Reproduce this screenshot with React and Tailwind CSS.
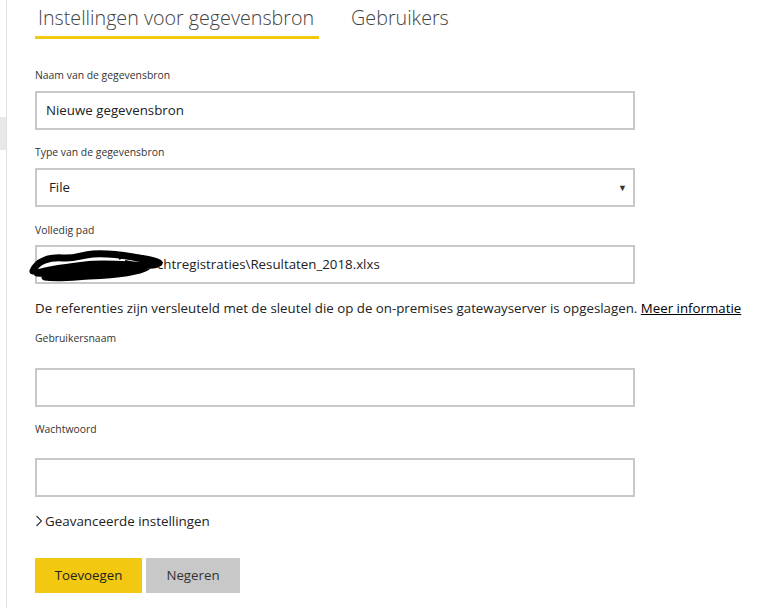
import React from 'react';

const font = { fontFamily: '"Open Sans", "Noto Sans", sans-serif' };

function Field({ label, gap = 8, children }) {
    return (
        <div>
            <div className="text-[10.4px] text-[#333] h-[16px] leading-[16px]" style={{ marginBottom: gap }}>{label}</div>
            {children}
        </div>
    );
}

function TextBox({ value }) {
    return (
        <div className="h-[39px] w-[600px] border-2 border-[#c8c8c8] bg-white flex items-center px-[9px] text-[13.3px] text-[#222]">
            {value}
        </div>
    );
}

export default function App() {
    return (
        <div className="relative w-[784px] h-[608px] bg-white overflow-hidden" style={font}>
            <div className="absolute left-0 top-[117px] w-[6px] h-[33px] bg-[#e8e8e8]"></div>
            <div className="absolute left-[6px] top-0 w-px h-full bg-[#e1e1e1]"></div>

            <div className="pl-[35px]">
                {/* tabs */}
                <div className="flex items-end h-[39px] gap-[32px]">
                    <div className="h-full border-b-[3px] border-[#f2c811] pl-[3px] pr-[5px] text-[19.7px] text-[#444] font-light leading-[36px]">
                        Instellingen voor gegevensbron
                    </div>
                    <div className="h-full text-[19.7px] text-[#444] font-light leading-[36px]">Gebruikers</div>
                </div>

                <div className="mt-[28px]">
                    <Field label="Naam van de gegevensbron">
                        <TextBox value="Nieuwe gegevensbron" />
                    </Field>
                </div>

                <div className="mt-[14px]">
                    <Field label="Type van de gegevensbron">
                        <div className="h-[39px] w-[600px] border-2 border-[#c8c8c8] bg-white flex items-center justify-between pl-[12px] pr-[6px] text-[13.3px] text-[#222]">
                            <span>File</span>
                            <span className="text-[9px] text-[#333]">▼</span>
                        </div>
                    </Field>
                </div>

                <div className="mt-[15px]">
                    <Field label="Volledig pad" gap={7}>
                        <div className="relative">
                            <div className="h-[39px] w-[600px] border-2 border-[#c8c8c8] bg-white flex items-center pl-[120px] text-[13.3px] text-[#222]">
                                chtregistraties\Resultaten_2018.xlxs
                            </div>
                            <svg className="absolute left-[-6px] top-[4px]" width="134" height="34" viewBox="0 0 134 34">
                                <path d="M4 22 C8 12, 20 8, 34 9 C46 10, 52 6, 64 5 C78 4, 92 6, 104 8 C114 10, 124 10, 130 14 C124 18, 112 16, 100 16 C86 15, 70 14, 56 16 C40 18, 22 20, 8 24 C20 26, 40 22, 60 22 C80 22, 100 20, 118 18 C108 24, 84 26, 60 27 C44 28, 28 30, 16 28"
                                    stroke="#000" strokeWidth="7" fill="none" strokeLinecap="round" strokeLinejoin="round" />
                                <path d="M90 10 C100 4, 116 6, 124 12 C118 16, 104 14, 96 12" stroke="#000" strokeWidth="2" fill="none" />
                            </svg>
                        </div>
                    </Field>
                </div>

                <p className="mt-[14px] text-[13.3px] text-[#222] leading-[20px] whitespace-nowrap">
                    De referenties zijn versleuteld met de sleutel die op de on-premises gatewayserver is opgeslagen.{' '}
                    <a className="underline text-black">Meer informatie</a>
                </p>

                <div className="mt-[12px]">
                    <Field label="Gebruikersnaam" gap={22}>
                        <TextBox value="" />
                    </Field>
                </div>

                <div className="mt-[14px]">
                    <Field label="Wachtwoord" gap={21}>
                        <TextBox value="" />
                    </Field>
                </div>

                <div className="mt-[14px] flex items-center text-[13.4px] text-[#222] h-[20px]">
                    <svg width="8" height="12" viewBox="0 0 8 12" className="mr-[2px]">
                        <path d="M1.5 1 L6.5 6 L1.5 11" stroke="#333" strokeWidth="1.1" fill="none" />
                    </svg>
                    Geavanceerde instellingen
                </div>

                <div className="mt-[27px] flex gap-[4px]">
                    <button className="h-[35px] w-[107px] bg-[#f2c811] text-[13.3px] text-[#222]">Toevoegen</button>
                    <button className="h-[35px] w-[94px] bg-[#c8c8c8] text-[13.3px] text-[#333]">Negeren</button>
                </div>
            </div>
        </div>
    );
}
